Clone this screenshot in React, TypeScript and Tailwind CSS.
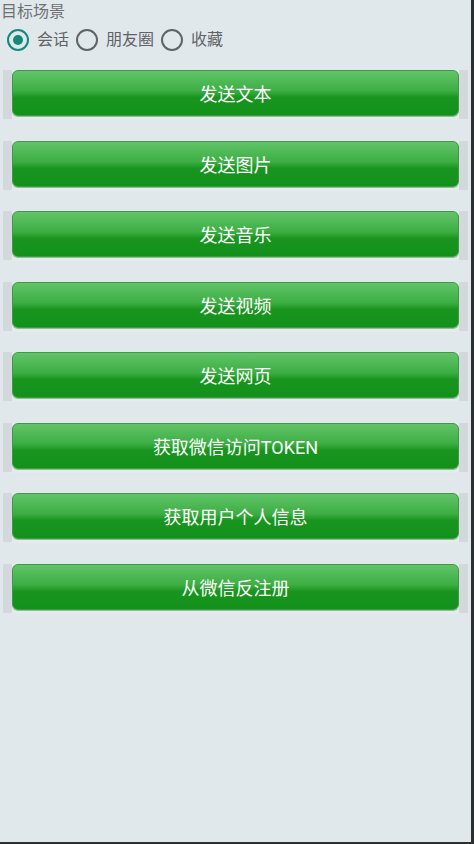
const ACTIONS = [
  "发送文本",
  "发送图片",
  "发送音乐",
  "发送视频",
  "发送网页",
  "获取微信访问TOKEN",
  "获取用户个人信息",
  "从微信反注册",
];

const SCENES = [
  { label: "会话", checked: true },
  { label: "朋友圈", checked: false },
  { label: "收藏", checked: false },
];

function Radio({ checked }: { checked: boolean }) {
  return (
    <span
      className={
        checked
          ? "flex h-[22px] w-[22px] items-center justify-center rounded-full border-[2.5px] border-[#14897a]"
          : "flex h-[22px] w-[22px] items-center justify-center rounded-full border-[2.5px] border-[#5f6467]"
      }
    >
      {checked && <span className="h-[10px] w-[10px] rounded-full bg-[#14897a]" />}
    </span>
  );
}

export default function App() {
  return (
    <div className="h-[844px] w-[474px] bg-[#2c2f30] [font-family:Roboto,'Noto_Sans_CJK_SC',sans-serif]">
      <div className="h-[842px] w-[471px] bg-[#e0e8eb]">
        <div className="pl-px pt-[1px] text-[16px] leading-[22px] text-[#6e7173]">目标场景</div>
        <div className="mt-[5px] flex h-[24px] items-center pl-[7px]">
          {SCENES.map((s) => (
            <label key={s.label} className="mr-[7px] flex items-center gap-[8px]">
              <Radio checked={s.checked} />
              <span className="text-[16px] text-[#5f6366]">{s.label}</span>
            </label>
          ))}
        </div>
        <div className="mt-[18px] flex flex-col">
          {ACTIONS.map((a) => (
            <div key={a} className="h-[70.5px]">
              <div className="ml-[3px] mt-px h-[49px] w-[465px] bg-[#d2d8db] pl-[9px]">
                <div className="-mt-px h-[50px] w-[447px] bg-[#e5eaec]">
                  <button className="flex h-[46px] w-[447px] items-center justify-center rounded-[6px] border border-[#3f9a45] bg-[linear-gradient(#62c469,#3cae43_45%,#19951f_60%,#12911a)] pt-[3px] text-[18px] text-white shadow-[0_1px_0_#8cbf8f]">
                    {a}
                  </button>
                </div>
              </div>
            </div>
          ))}
        </div>
      </div>
    </div>
  );
}
